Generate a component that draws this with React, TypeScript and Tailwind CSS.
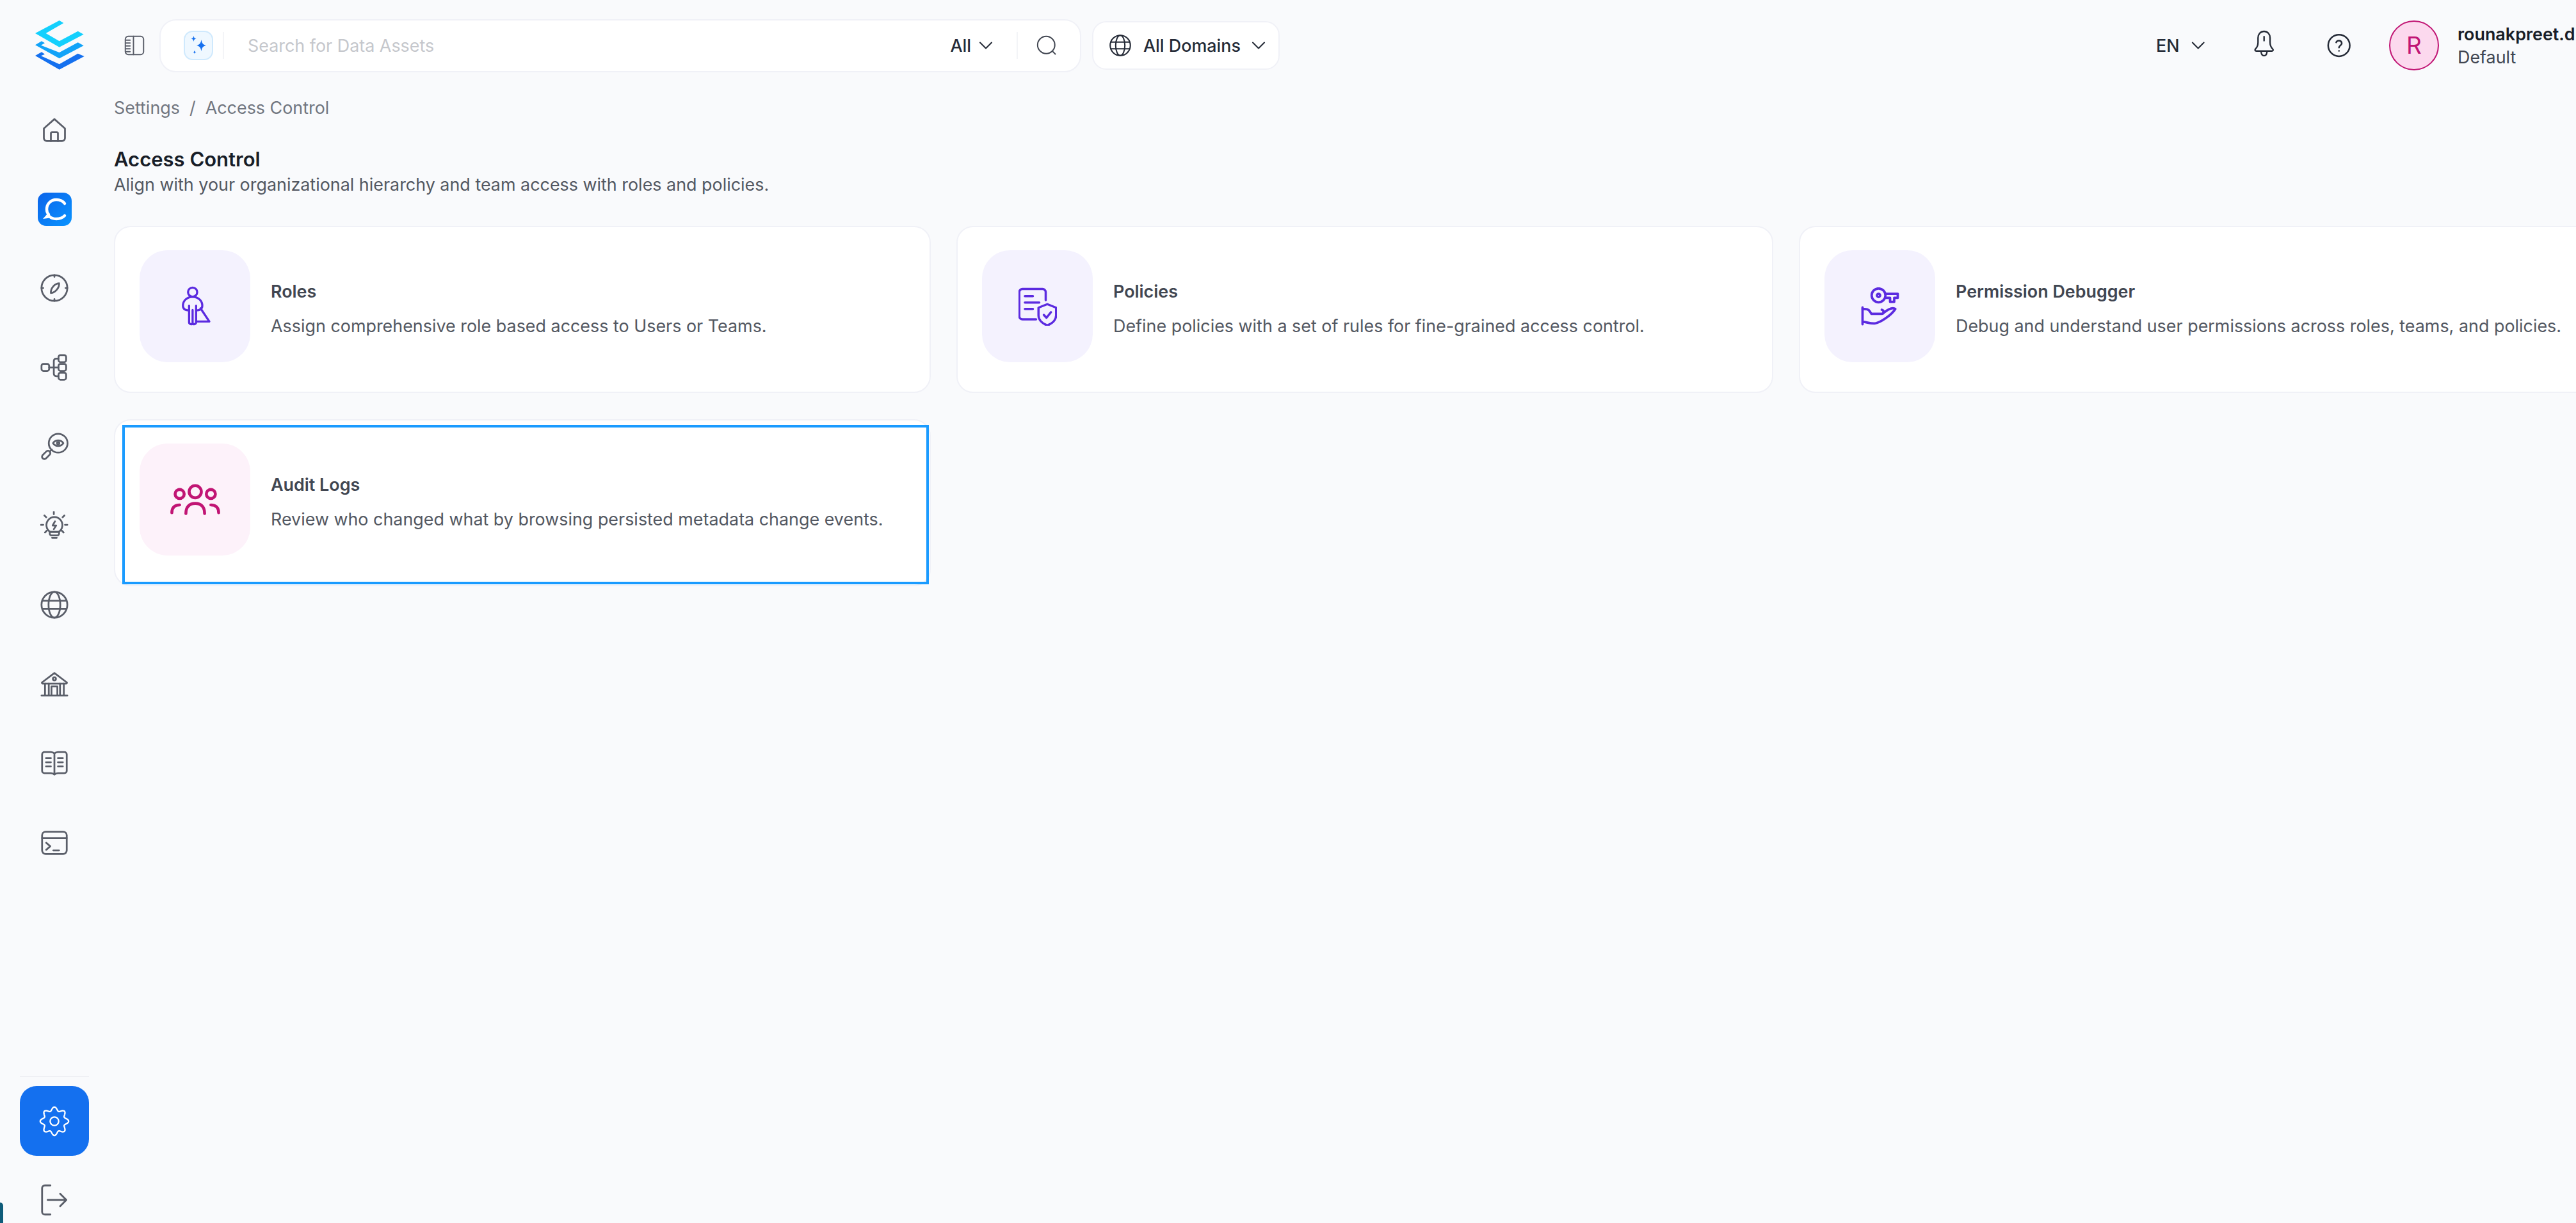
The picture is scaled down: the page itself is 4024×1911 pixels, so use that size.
import { ReactNode } from 'react'
import { ChevronDown } from 'lucide-react'

// ---- iconos de la barra lateral ----

const gearPath = (() => {
  const puntos: string[] = []
  for (let i = 0; i < 160; i++) {
    const t = (i / 160) * Math.PI * 2
    const r = 9.3 + 1.35 * Math.cos(8 * t)
    puntos.push(`${(12 + r * Math.cos(t)).toFixed(2)} ${(12 + r * Math.sin(t)).toFixed(2)}`)
  }
  return `M${puntos.join('L')}Z`
})()

function Line({ size = 44, width = 1.5, className = '', children }: { size?: number; width?: number; className?: string; children: ReactNode }) {
  return (
    <svg
      viewBox="0 0 24 24"
      width={size}
      height={size}
      fill="none"
      stroke="currentColor"
      strokeWidth={width}
      strokeLinecap="round"
      strokeLinejoin="round"
      className={className}
    >
      {children}
    </svg>
  )
}

function Logo() {
  return (
    <svg viewBox="162 100 234 231" width={78} height={77} className="ml-4">
      <path d="M278 100l20 12-83 48 63 37 87-47 27 15-114 60-113-65z" fill="#14d0fd" />
      <path d="M165 215l30-18 15 9-18 10 86 34 87-47 27 15-114 60z" fill="#12a3f8" />
      <path d="M165 265l30-17 15 10-18 8 86 39 87-50 30 13-117 62z" fill="#1470ef" />
    </svg>
  )
}

function ChatLogo() {
  return (
    <svg viewBox="0 0 53 52" width={53} height={52}>
      <defs>
        <linearGradient id="chatbg" x1="0" y1="0" x2="1" y2="1">
          <stop offset="0" stopColor="#0b63ea" />
          <stop offset="1" stopColor="#0a94ff" />
        </linearGradient>
      </defs>
      <rect width="53" height="52" rx="13" fill="url(#chatbg)" />
      <path d="M42 17C39 13 34 11 29 11 20 11 14 18 14 26c0 3 1 6 3 8M42 36c-3 3-8 5-13 5-4 0-8-1-11-4" fill="none" stroke="#fff" strokeWidth="4.500" strokeLinecap="round" />
      <path d="M16 32l4 6 3 1-15 2z" fill="#fff" />
    </svg>
  )
}

const navIcons: ReactNode[] = [
  <Line key="home">
    <path d="M3 10.800L12 2.800l9 8v8.200a2.500 2.500 0 0 1-2.500 2.500h-13A2.500 2.500 0 0 1 3 19z" />
    <path d="M9 21.500V15a1 1 0 0 1 1-1h4a1 1 0 0 1 1 1v6.500" />
  </Line>,
  <ChatLogo key="chat" />,
  <Line key="compass">
    <circle cx="12" cy="12" r="11" />
    <path d="M12 1v1.500M12 21.500V23M1 12h1.500M21.500 12H23" />
    <path d="M16 8c.4 3.500-3 8-7 8.300C8.600 12.500 12 8.300 16 8z" />
  </Line>,
  <Line key="nodes">
    <rect x="1" y="9" width="6.500" height="6" rx="1.600" />
    <rect x="15.500" y="1.500" width="6.500" height="6" rx="1.600" />
    <rect x="15.500" y="9" width="6.500" height="6" rx="1.600" />
    <rect x="15.500" y="16.500" width="6.500" height="6" rx="1.600" />
    <path d="M7.500 12h8M15.500 4.500h-2a2 2 0 0 0-2 2v11a2 2 0 0 0 2 2h2" />
  </Line>,
  <Line key="eye">
    <circle cx="15.200" cy="9" r="8" />
    <path d="M10.800 9c2-3.200 6.800-3.200 8.800 0-2 3.200-6.800 3.200-8.800 0z" />
    <circle cx="15.200" cy="9" r="1" />
    <rect x="-4.200" y="-2" width="8.400" height="4" rx="2" transform="translate(5 19) rotate(-45)" />
    <path d="M7.800 16.400l2-2" />
  </Line>,
  <Line key="bulb">
    <path d="M8.500 17.500a6.800 6.800 0 1 1 7 0z" />
    <path d="M8 17.500h8v1.500a1.500 1.500 0 0 1-1.500 1.500h-5A1.500 1.500 0 0 1 8 19zM10 22.500h4" />
    <path d="M12.500 8.500L10.500 12h3l-2 3.200" />
    <path d="M11.500 0.500v2M3.500 3.500l1.500 1.500M20.500 3.500L19 5M0.500 11.500h2M21 11.500h2M4 18l1.500-1.500M19.800 18l-1.500-1.500" />
  </Line>,
  <Line key="globe">
    <circle cx="12" cy="12" r="11" />
    <ellipse cx="12" cy="12" rx="5" ry="11" />
    <path d="M1.800 8.500h20.400M1.800 15.500h20.400" />
  </Line>,
  <Line key="bank">
    <path d="M1.500 10.500L12 2.500l10.500 8a.6.6 0 0 1-.4 1H1.900a.6.6 0 0 1-.4-1z" />
    <circle cx="12" cy="7.500" r="1.300" />
    <path d="M4 11.500v10M7.200 11.500v10M16.800 11.500v10M20 11.500v10M1 21.800h22M9.500 21.500v-7.500h5v7.500" />
  </Line>,
  <Line key="book">
    <path d="M12 4c-1-1-2-1.200-3-1.200H3.500a2 2 0 0 0-2 2v14a2 2 0 0 0 2 2H9c1.200 0 2.200.3 3 1.200.8-.9 1.800-1.200 3-1.200h5.500a2 2 0 0 0 2-2v-14a2 2 0 0 0-2-2H15c-1 0-2 .2-3 1.200zM12 4v18" />
    <path d="M4.800 8H9M4.800 11.500H9M4.800 15H9M15 8h4.200M15 11.500h4.200M15 15h4.200" />
  </Line>,
  <Line key="terminal">
    <rect x="1.500" y="3" width="21" height="19" rx="3" />
    <path d="M1.500 8.500h21M5 12.500l3.500 3-3.500 3M11 19h5" />
  </Line>,
]

// ---- iconos de las tarjetas ----

const RolesIcon = (
  <Line size={66} width={1.2} className="text-[#5b2be0]">
    <circle cx="10.500" cy="3.800" r="2.600" />
    <path d="M10.500 6.500C7 6.500 5 9 5 11.500c0 1.800 1.500 3 3.500 2.500M10.500 6.500c3.500 0 5.500 2.500 5.500 5 0 1.800-1.500 3-3.500 2.500" />
    <path d="M8.500 11.500V21a1 1 0 0 0 1 1h.5a.5.5 0 0 0 .5-.5V14M10.500 14v7.500a.5.5 0 0 0 .5.500h.5a1 1 0 0 0 1-1v-9.500M15 13l5 7.500h-7.500" />
  </Line>
)

const PoliciesIcon = (
  <Line size={60} width={1.4} className="text-[#5b2be0]">
    <path d="M17 8V3a2 2 0 0 0-2-2H2.500a2 2 0 0 0-2 2v15a2 2 0 0 0 2 2H11" />
    <path d="M4 5.500h5M4 9.500h9M4 13.500h5" />
    <path d="M18 10.500l5.500 2.200v4.800c0 3-2.500 5.200-5.500 6.300-3-1.100-5.500-3.300-5.500-6.300v-4.800z" />
    <path d="M15.800 17.200l1.700 1.800 2.800-3.500" />
  </Line>
)

const KeyHandIcon = (
  <Line size={60} width={1.5} className="text-[#5b2be0]">
    <circle cx="11" cy="5" r="4.300" />
    <circle cx="11" cy="5" r="1" />
    <path d="M15.300 4h7.700v2.500h-2.200v2.500h-2.600v-2.500h-3" />
    <path d="M1 12.500v10.500M1 21.500c2.500 0 5 1.500 8 1 3-.5 10-5 12.500-9-2-1.500-5 .5-7.500 2.500" />
    <path d="M1 13.500h1.500c2.500 0 3 1.500 4 3h6.500c1.500 0 1.500-2.200 0-2.500" />
  </Line>
)

const AuditIcon = (
  <svg viewBox="0 0 32 20" width={78} height={49} fill="none" stroke="#c11574" strokeWidth={1.9} strokeLinecap="round">
    <circle cx="6" cy="6.500" r="2.900" />
    <circle cx="16" cy="5" r="3.900" />
    <circle cx="26" cy="6.500" r="2.900" />
    <path d="M1 18.500c0-3 1.500-5 5-5M31 18.500c0-3-1.500-5-5-5M10 19c0-4 2-6.500 6-6.500s6 2.500 6 6.500" />
  </svg>
)

interface Tarjeta {
  titulo: string
  descripcion: string
  icono: ReactNode
  rosa?: boolean
  foco?: boolean
}

const tarjetas: Tarjeta[] = [
  { titulo: 'Roles', descripcion: 'Assign comprehensive role based access to Users or Teams.', icono: RolesIcon },
  { titulo: 'Policies', descripcion: 'Define policies with a set of rules for fine-grained access control.', icono: PoliciesIcon },
  { titulo: 'Permission Debugger', descripcion: 'Debug and understand user permissions across roles, teams, and policies.', icono: KeyHandIcon },
  { titulo: 'Audit Logs', descripcion: 'Review who changed what by browsing persisted metadata change events.', icono: AuditIcon, rosa: true, foco: true },
]

function Card({ tarjeta }: { tarjeta: Tarjeta }) {
  return (
    <div className="relative flex h-[261px] gap-[32px] rounded-[26px] border-2 border-[#f0f1f7] bg-white pl-[38px] pt-[36px]">
      <div className={`flex h-[175px] w-[173px] shrink-0 items-center justify-center rounded-[44px] ${tarjeta.rosa ? 'bg-[#fdf2fa]' : 'bg-[#f4f2fe]'}`}>
        {tarjeta.icono}
      </div>
      <div className="pt-[46px]">
        <p className="text-[26.900px] leading-[36px] font-semibold text-[#414651]">{tarjeta.titulo}</p>
        <p className="mt-[18px] whitespace-nowrap text-[26.900px] leading-[36px] text-[#535862]">{tarjeta.descripcion}</p>
      </div>
      {tarjeta.foco && <div className="absolute top-[7px] right-[1px] bottom-[1px] left-[11px] border-4 border-[#1a9bff]" />}
    </div>
  )
}

export default function App() {
  return (
    <div className="relative flex h-[1911px] w-[4024px] overflow-hidden bg-[#f9fafc] font-['Inter',sans-serif]">
      {/* Barra lateral */}
      <aside className="flex h-full w-[170px] shrink-0 flex-col items-center text-[#5a5e69]">
        <div className="flex h-[141px] shrink-0 items-center justify-center">
          <Logo />
        </div>
        {navIcons.map((icono, i) => (
          <div key={i} className="flex h-[123.700px] shrink-0 items-center justify-center">
            {icono}
          </div>
        ))}
        <div className="mt-auto flex flex-col items-center pb-[10px]">
          <div className="h-[2px] w-[108px] bg-[#eff0f4]" />
          <div className="mt-[14px] flex h-[109px] w-[108px] items-center justify-center rounded-[26px] bg-[#1470ef] text-white">
            <Line size={50} width={1.1}>
              <path d={gearPath} />
              <circle cx="12" cy="12" r="3.200" />
            </Line>
          </div>
          <div className="mt-[43px] mr-[6px]">
            <Line size={52} width={1.3}>
              <path d="M10.500 1.500H6.500a2 2 0 0 0-2 2v17a2 2 0 0 0 2 2h4M8.500 12H22M17.500 7.500L22 12l-4.500 4.500" />
            </Line>
          </div>
        </div>
      </aside>
      {/* esquina inferior del fondo */}
      <div className="absolute bottom-0 left-0 h-[32px] w-[5px] rounded-tr-[6px] bg-[#0f5c7a]" />

      <main className="min-w-0 flex-1 overflow-hidden">
        {/* Cabecera */}
        <header className="flex h-[142px] items-center text-[#252b37]">
          <div className="ml-[22px] text-[#5a5e69]">
            <Line size={36} width={1.3}>
              <rect x="2.500" y="2.500" width="19" height="19" rx="3" />
              <path d="M11 2.500v19M3 6.500h4.500M3 9.500h4.500M3 12.500h4.500M3 15.500h4.500M3 18.500h4.500" />
            </Line>
          </div>
          <div className="ml-[21px] flex h-[83px] w-[1440px] shrink-0 items-center rounded-[26px] border-2 border-[#f0f1f7] bg-white">
            <div className="ml-[36px] flex h-[46px] w-[46px] shrink-0 items-center justify-center rounded-[14px] border-2 border-[#cfe9fd] bg-[#eff8ff]">
              <svg viewBox="0 0 24 24" width={36} height={36} fill="#1570ef">
                <path d="M15 6c.6 3.500 1.500 5.200 5 6-3.500.8-4.400 2.500-5 6-.6-3.500-1.500-5.200-5-6 3.500-.8 4.400-2.500 5-6z" />
                <path d="M7 2c.3 1.900.9 2.700 2.700 3-1.800.3-2.400 1.100-2.700 3-.3-1.900-.9-2.700-2.700-3 1.800-.3 2.400-1.100 2.700-3z" />
                <path d="M8 17c.2 1.200.6 1.800 1.800 2-1.200.2-1.600.8-1.800 2-.2-1.200-.6-1.800-1.800-2 1.200-.2 1.600-.8 1.800-2z" />
              </svg>
            </div>
            <div className="ml-[15px] h-[42px] w-[2px] bg-[#f3f4f7]" />
            <span className="ml-[37px] text-[26.900px] text-[#c5c7cc]">Search for Data Assets</span>
            <span className="ml-auto text-[26.900px] font-medium">All</span>
            <ChevronDown size={36} strokeWidth={1.4} className="ml-[5px]" />
            <div className="ml-[30px] h-[42px] w-[2px] bg-[#f3f4f7]" />
            <svg viewBox="0 0 24 24" width={34} height={34} fill="none" stroke="#414651" strokeWidth={1.4} strokeLinecap="round" className="ml-[28px] mr-[35px]">
              <circle cx="11.500" cy="11.500" r="9.500" />
              <path d="M19 19l2.500 2.500" />
            </svg>
          </div>
          <div className="ml-[17px] flex h-[76px] w-[293px] shrink-0 items-center rounded-[22px] border-2 border-[#f0f1f7] bg-white pl-[24px]">
            <Line size={36} width={1.4}>
              <circle cx="12" cy="12" r="10.500" />
              <ellipse cx="12" cy="12" rx="4.800" ry="10.500" />
              <path d="M2 8.500h20M2 15.500h20" />
            </Line>
            <span className="ml-[18px] whitespace-nowrap text-[26.900px] font-medium">All Domains</span>
            <ChevronDown size={36} strokeWidth={1.4} className="ml-[10px]" />
          </div>

          <div className="ml-auto flex w-[656px] shrink-0 items-center">
            <span className="text-[26.900px] font-medium">EN</span>
            <ChevronDown size={36} strokeWidth={1.4} className="ml-[11px]" />
            <svg viewBox="0 0 24 24" width={44} height={44} fill="none" stroke="#252b37" strokeWidth={1.3} strokeLinecap="round" strokeLinejoin="round" className="mb-[6px] ml-[64px]">
              <path d="M12 1.500c-3.200 0-5.200 2.500-5.200 5.700v3.800c0 2.800-1 4.500-2.300 5.800-.7.800-.2 1.700.8 1.700h13.400c1 0 1.500-.9.800-1.700-1.300-1.300-2.300-3-2.300-5.800V7.200c0-3.200-2-5.700-5.200-5.700z" />
              <path d="M9.500 19.500c.3 2 1.200 3 2.500 3s2.200-1 2.500-3M12 6v3.500" />
            </svg>
            <svg viewBox="0 0 24 24" width={38} height={38} fill="none" stroke="#252b37" strokeWidth={1.6} strokeLinecap="round" strokeLinejoin="round" className="ml-[76px]">
              <circle cx="12" cy="12" r="10.800" />
              <path d="M9.200 9a2.900 2.900 0 0 1 5.600.9c0 1.900-2.800 2.400-2.800 4.100M12 17.500h.01" />
            </svg>
            <div className="ml-[60px] flex h-[78px] w-[78px] shrink-0 items-center justify-center rounded-full border-2 border-[#c11574] bg-[#fcd9ee] text-[37px] text-[#c11574]">R</div>
            <div className="ml-[29px] w-[185px] shrink-0 overflow-hidden">
              <p className="whitespace-nowrap text-[26.900px] leading-[36px] font-semibold text-[#181d27]">rounakpreet.d</p>
              <p className="whitespace-nowrap text-[26.900px] leading-[36px] text-[#414651]">Default</p>
            </div>
          </div>
        </header>

        {/* Contenido */}
        <div className="pl-[8px]">
          <nav className="flex h-[52px] items-center text-[26.900px] text-[#717680]">
            <span>Settings</span>
            <span className="mx-[15px]">/</span>
            <span>Access Control</span>
          </nav>
          <h1 className="mt-[35px] text-[31px] leading-[40px] font-semibold text-[#181d27]">Access Control</h1>
          <p className="text-[26.900px] leading-[38px] text-[#535862]">Align with your organizational hierarchy and team access with roles and policies.</p>
          <div className="mt-[46px] grid grid-cols-[repeat(3,1276px)] gap-x-[40px] gap-y-[41px]">
            {tarjetas.map((t) => (
              <Card key={t.titulo} tarjeta={t} />
            ))}
          </div>
        </div>
      </main>
    </div>
  )
}
